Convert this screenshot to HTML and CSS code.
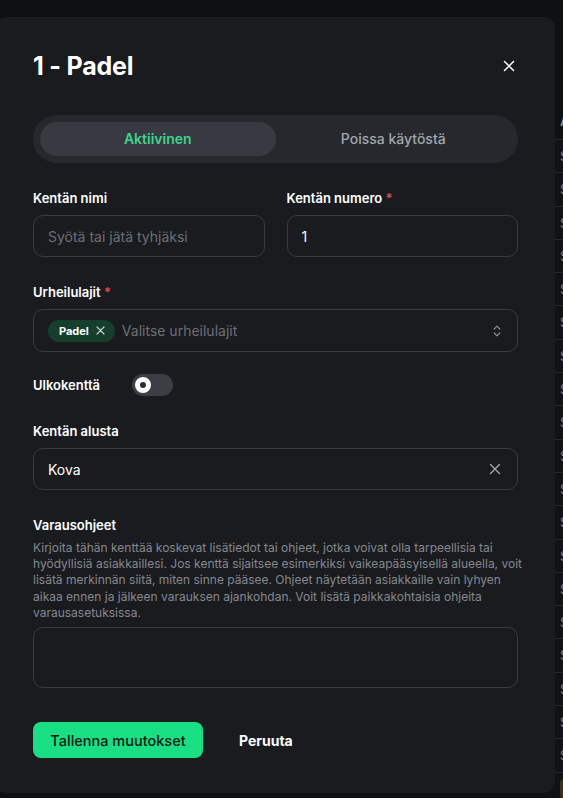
FILE: index.html
```html
<!DOCTYPE html>
<html lang="fi">
<head>
    <meta charset="UTF-8">
    <title>Kentät</title>
    <link rel="stylesheet" href="styles.css">
</head>
<body>
    <main class="courts">
        <div class="courts-table">
            <div class="courts-head">Alusta</div>
            <div class="courts-row">Sisä</div>
            <div class="courts-row">Sisä</div>
            <div class="courts-row">Sisä</div>
            <div class="courts-row">Sisä</div>
            <div class="courts-row">Sisä</div>
            <div class="courts-row">Sisä</div>
            <div class="courts-row">Sisä</div>
            <div class="courts-row">Sisä</div>
            <div class="courts-row">Sisä</div>
            <div class="courts-row">Sisä</div>
            <div class="courts-row">Sisä</div>
            <div class="courts-row">Sisä</div>
            <div class="courts-row">Sisä</div>
            <div class="courts-row">Sisä</div>
            <div class="courts-row">Sisä</div>
            <div class="courts-row">Sisä</div>
            <div class="courts-row">Sisä</div>
            <div class="courts-row">Sisä</div>
            <div class="courts-row">Sisä</div>
            <div class="courts-row"><span class="courts-badge">Ulko</span></div>
        </div>
    </main>

    <div class="modal">
        <div class="modal-head">
            <h1 class="modal-title">1 - Padel</h1>
            <button class="icon-btn" type="button">
                <svg width="12" height="12" viewBox="0 0 12 12"><path d="M1.5 1.5 L10.5 10.5 M10.5 1.5 L1.5 10.5" stroke="#fff" stroke-width="1.5" stroke-linecap="round"/></svg>
            </button>
        </div>

        <div class="segmented">
            <div class="segment active">Aktiivinen</div>
            <div class="segment">Poissa käytöstä</div>
        </div>

        <div class="field-row">
            <div class="field">
                <label class="field-label">Kentän nimi</label>
                <div class="input"><span class="placeholder">Syötä tai jätä tyhjäksi</span></div>
            </div>
            <div class="field">
                <label class="field-label">Kentän numero <span class="req">*</span></label>
                <div class="input"><span class="value">1</span></div>
            </div>
        </div>

        <div class="field gap-top">
            <label class="field-label">Urheilulajit <span class="req">*</span></label>
            <div class="input select sports">
                <span class="chip">Padel
                    <svg width="9" height="9" viewBox="0 0 9 9"><path d="M1 1 L8 8 M8 1 L1 8" stroke="#c9cfcc" stroke-width="1.2" stroke-linecap="round"/></svg>
                </span>
                <span class="placeholder">Valitse urheilulajit</span>
                <svg class="input-icon" width="8" height="14" viewBox="0 0 8 14"><path d="M1.2 5 L4 2.2 L6.8 5 M1.2 9 L4 11.8 L6.8 9" fill="none" stroke="#8b8e94" stroke-width="1.2" stroke-linecap="round" stroke-linejoin="round"/></svg>
            </div>
        </div>

        <div class="switch-row">
            <span class="field-label">Ulkokenttä</span>
            <span class="switch"><span class="switch-knob"></span></span>
        </div>

        <div class="field gap-top">
            <label class="field-label">Kentän alusta</label>
            <div class="input select">
                <span class="value">Kova</span>
                <svg class="input-icon" width="12" height="12" viewBox="0 0 12 12"><path d="M1.5 1.5 L10.5 10.5 M10.5 1.5 L1.5 10.5" stroke="#a9acb2" stroke-width="1.3" stroke-linecap="round"/></svg>
            </div>
        </div>

        <div class="field gap-top-lg">
            <label class="field-label">Varausohjeet</label>
            <p class="help">Kirjoita tähän kenttää koskevat lisätiedot tai ohjeet, jotka voivat olla tarpeellisia tai<br>
                hyödyllisiä asiakkaillesi. Jos kenttä sijaitsee esimerkiksi vaikeapääsyisellä alueella, voit<br>
                lisätä merkinnän siitä, miten sinne pääsee. Ohjeet näytetään asiakkaille vain lyhyen<br>
                aikaa ennen ja jälkeen varauksen ajankohdan. Voit lisätä paikkakohtaisia ohjeita<br>
                varausasetuksissa.</p>
            <div class="textarea"></div>
        </div>

        <div class="actions">
            <button class="btn-primary" type="button">Tallenna muutokset</button>
            <button class="btn-text" type="button">Peruuta</button>
        </div>
    </div>
</body>
</html>
```

FILE: styles.css
```css
* {
    margin: 0;
    padding: 0;
    box-sizing: border-box;
}
body {
    background: #0f1013;
    font-family: Inter, "Noto Sans", sans-serif;
    color: #fff;
    height: 798px;
    overflow: hidden;
}

/* table behind the dialog */
.courts-table {
    margin: 105px 0 0 555px;
    overflow: hidden;
}
.courts-head {
    height: 35px;
    line-height: 33px;
    padding-left: 5px;
    font-size: 13px;
    font-weight: 600;
    color: #8e95a2;
    border-bottom: 1px solid #26282c;
    white-space: nowrap;
}
.courts-row {
    height: 33.3px;
    line-height: 32px;
    padding-left: 5px;
    font-size: 13px;
    color: #7b8392;
    border-bottom: 1px solid #26282c;
    white-space: nowrap;
    background: #111215;
}
.courts-badge {
    padding: 2px 5px;
    background: #3a2f1c;
    color: #c99a4c;
    border-radius: 4px;
}

/* dialog */
.modal {
    position: fixed;
    top: 17px;
    left: -4px;
    width: 559px;
    height: 776px;
    background: #1a1b1f;
    border-radius: 10px;
    padding: 34px 37px 35px 37px;
}
.modal-head {
    display: flex;
    justify-content: space-between;
    align-items: center;
    height: 30px;
}
.modal-title {
    font-size: 25px;
    line-height: 30px;
    font-weight: 700;
    letter-spacing: -0.2px;
}
.icon-btn {
    background: none;
    border: 0;
    display: flex;
    margin-right: 3px;
}

.segmented {
    margin-top: 34px;
    display: grid;
    grid-template-columns: 1fr 1fr;
    padding: 7px;
    background: #26282d;
    border-radius: 24px;
}
.segment {
    height: 34px;
    line-height: 34px;
    text-align: center;
    font-size: 14px;
    font-weight: 500;
    color: #a3a6ac;
    border-radius: 17px;
}
.segment.active {
    background: #373a41;
    color: #3fd38b;
    font-weight: 600;
}

.field-row {
    margin-top: 27px;
    display: grid;
    grid-template-columns: 1fr 1fr;
    gap: 22px;
}
.field {
    display: flex;
    flex-direction: column;
}
.gap-top {
    margin-top: 27px;
}
.gap-top-lg {
    margin-top: 27px;
}
.field-label {
    display: block;
    font-size: 13px;
    line-height: 17px;
    font-weight: 600;
    color: #fff;
    margin-bottom: 8px;
}
.req {
    color: #e5484d;
}
.input {
    height: 42px;
    border: 1px solid #3a3c42;
    border-radius: 10px;
    display: flex;
    align-items: center;
    padding: 0 14px;
    font-size: 14px;
}
.placeholder {
    color: #6c6f76;
}
.value {
    color: #fff;
}
.select {
    gap: 9px;
}
.sports {
    height: 43px;
    gap: 7px;
}
.input-icon {
    margin-left: auto;
    margin-right: 2px;
}
.chip {
    display: inline-flex;
    align-items: center;
    gap: 7px;
    height: 22px;
    padding: 0 10px 0 11px;
    background: #163e2d;
    border-radius: 11px;
    font-size: 11px;
    font-weight: 700;
}

.switch-row {
    margin-top: 22px;
    display: flex;
    align-items: center;
    gap: 33px;
    height: 22px;
}
.switch-row .field-label {
    margin-bottom: 0;
    width: 66px;
}
.switch {
    width: 41px;
    height: 22px;
    border-radius: 11px;
    background: #3b3e45;
    display: flex;
    align-items: center;
    padding-left: 3px;
}
.switch-knob {
    width: 16px;
    height: 16px;
    border-radius: 50%;
    border: 5px solid #fff;
    background: #2c2e34;
}

.help {
    margin-top: -2px;
    font-size: 12px;
    line-height: 16.2px;
    color: #85888e;
    white-space: nowrap;
}
.textarea {
    margin-top: 6px;
    height: 61px;
    border: 1px solid #3a3c42;
    border-radius: 10px;
}

.actions {
    margin-top: 34px;
    display: flex;
    align-items: center;
    gap: 36px;
}
.btn-primary {
    height: 36px;
    width: 170px;
    border: 0;
    border-radius: 8px;
    background: #19de84;
    color: #0c1b13;
    font-family: inherit;
    font-size: 14.5px;
    font-weight: 500;
}
.btn-text {
    background: none;
    border: 0;
    color: #fff;
    font-family: inherit;
    font-size: 14px;
    font-weight: 700;
}
```
